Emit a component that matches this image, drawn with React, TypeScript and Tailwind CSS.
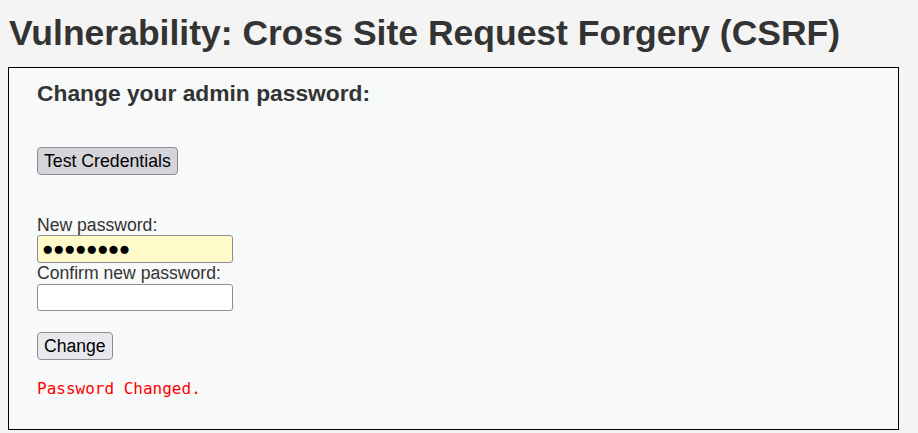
export default function App() {
  return (
    <div className="min-h-[433px] bg-[#f4f4f4] text-[#333] font-['Liberation_Sans',Arial,sans-serif] pt-[12px] px-2">
      <h1 className="text-[35.5px] leading-[42px] font-bold pl-px">Vulnerability: Cross Site Request Forgery (CSRF)</h1>
      <div className="mt-[13px] border border-black bg-[#f8f9f9] h-[363px] w-[891px] pl-7 pt-[12px]">
        <h3 className="text-[22.8px] leading-[26px] font-bold">Change your admin password:</h3>
        <button className="mt-[41px] h-[28px] px-[6px] pt-px text-[17.7px] text-black bg-[#d4d4da] border border-[#8a8a92] rounded-[4px] leading-none">
          Test Credentials
        </button>
        <div className="mt-[41px] text-[17.6px] leading-[19px]">New password:</div>
        <div className="w-[196px] h-[28px] bg-[#fffbc8] border border-[#8d8d96] rounded-[3px] flex items-center pl-[4px] text-[19px] tracking-[-0.5px] text-black">
          ●●●●●●●●
        </div>
        <div className="mt-[1px] text-[17.6px] leading-[19px]">Confirm new password:</div>
        <input type="password" className="mt-[1px] block w-[196px] h-[27px] bg-white border border-[#8d8d96] rounded-[3px]" />
        <button className="mt-[21px] h-[28px] px-[6px] pt-px text-[17.6px] text-black bg-[#e9e9ed] border border-[#8d8d96] rounded-[4px] leading-none">
          Change
        </button>
        <pre className="mt-[20px] text-[16px] leading-[18px] text-[#ff0000] font-['DejaVu_Sans_Mono','Liberation_Mono',monospace]">Password Changed.</pre>
      </div>
    </div>
  );
}
